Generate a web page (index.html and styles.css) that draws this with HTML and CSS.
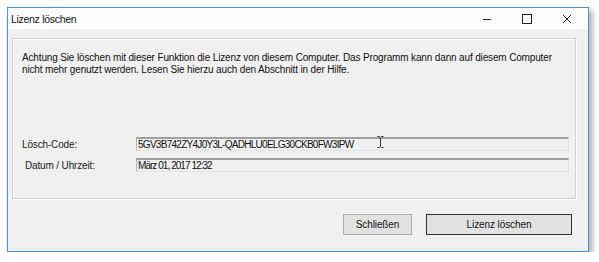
FILE: index.html
```html
<!DOCTYPE html>
<html lang="de">
<head>
<meta charset="utf-8">
<title>Lizenz löschen</title>
<link rel="stylesheet" href="styles.css">
</head>
<body>
<div class="window">
  <div class="titlebar">
    <span class="title">Lizenz löschen</span>
    <div class="controls">
      <span class="ctl"><svg width="10" height="10" viewBox="0 0 10 10"><path d="M1 5.5H9" stroke="#222" stroke-width="1"/></svg></span>
      <span class="ctl"><svg width="10" height="10" viewBox="0 0 10 10"><rect x="0.5" y="0.5" width="9" height="9" fill="none" stroke="#222" stroke-width="1"/></svg></span>
      <span class="ctl"><svg width="10" height="10" viewBox="0 0 10 10"><path d="M1 1L9 9M9 1L1 9" stroke="#222" stroke-width="1"/></svg></span>
    </div>
  </div>
  <div class="client">
    <div class="group">
      <p class="msg">Achtung Sie löschen mit dieser Funktion die Lizenz von diesem Computer. Das Programm kann dann auf diesem Computer nicht mehr genutzt werden. Lesen Sie hierzu auch den Abschnitt in der Hilfe.</p>
      <div class="row first">
        <span class="label">Lösch-Code:</span>
        <span class="field code">5GV3B742ZY4J0Y3L-QADHLU0ELG30CKB0FW3IPW</span>
      </div>
      <div class="row">
        <span class="label indent">Datum / Uhrzeit:</span>
        <span class="field date">März 01, 2017 12:32</span>
      </div>
      <svg class="ibeam" width="7" height="12" viewBox="0 0 7 12"><path d="M0.5 0.5H2.5L3.5 1.5L4.5 0.5H6.5M3.5 1.5V10.5M0.5 11.5H2.5L3.5 10.5L4.5 11.5H6.5" stroke="#333" fill="none" stroke-width="1"/></svg>
    </div>
    <div class="buttons">
      <button class="btn">Schließen</button>
      <button class="btn default">Lizenz löschen</button>
    </div>
  </div>
</div>
</body>
</html>
```
FILE: styles.css
```css
html, body {
  margin: 0;
  padding: 0;
  background: #ffffff;
}
body {
  padding: 7px 0 0 7px;
  font-family: "Liberation Sans", Arial, sans-serif;
  font-size: 10px;
  letter-spacing: -0.15px;
  color: #1a1a1a;
}
.window {
  width: 582px;
  height: 245px;
  box-sizing: border-box;
  border: 1px solid #4d93d9;
  background: #f0f0f0;
  display: flex;
  flex-direction: column;
  box-shadow: 3px 3px 6px rgba(0,0,0,0.35);
}
.titlebar {
  height: 21px;
  background: #ffffff;
  display: flex;
  align-items: center;
  justify-content: space-between;
}
.title {
  padding-left: 3px;
  font-size: 10.5px;
  letter-spacing: -0.3px;
  color: #111;
  padding-top: 1px;
}
.controls {
  display: flex;
  height: 100%;
  margin-right: 1px;
}
.ctl {
  width: 40px;
  display: flex;
  align-items: center;
  justify-content: center;
  padding-top: 1px;
}
.client {
  flex: 1;
  display: flex;
  flex-direction: column;
  padding: 9px 12px 0 4px;
}
.group {
  position: relative;
  height: 161px;
  box-sizing: border-box;
  border: 1px solid #d0d0d0;
  box-shadow: inset 1px 1px 0 #ffffff, 1px 1px 0 #ffffff;
  padding: 13px 6px 0 9px;
  display: flex;
  flex-direction: column;
}
.msg {
  margin: 0;
  line-height: 12px;
  width: 535px;
  color: #111;
}
.row {
  display: flex;
  align-items: center;
  height: 14px;
  margin-top: 7px;
}
.row.first {
  margin-top: 61px;
}
.label {
  width: 114px;
  flex: none;
  color: #222;
  padding-top: 1px;
}
.label.indent {
  padding-left: 3px;
  width: 111px;
}
.field {
  width: 434px;
  height: 14px;
  box-sizing: border-box;
  border-top: 2px solid #a0a0a0;
  border-left: 1px solid #b5b5b5;
  border-right: 1px solid #e3e3e3;
  border-bottom: 1px solid #e3e3e3;
  font-size: 10px;
  line-height: 11px;
  padding-left: 1px;
  color: #111;
  white-space: nowrap;
}
.field.code {
  letter-spacing: -0.72px;
}
.field.date {
  letter-spacing: -0.95px;
}
.ibeam {
  position: absolute;
  left: 364px;
  top: 97px;
}
.buttons {
  display: flex;
  justify-content: flex-end;
  gap: 14px;
  margin-top: 15px;
  padding-right: 4px;
}
.btn {
  height: 21px;
  width: 69px;
  box-sizing: border-box;
  border: 1px solid #adadad;
  background: #e1e1e1;
  font-family: "Liberation Sans", Arial, sans-serif;
  font-size: 10px;
  letter-spacing: -0.1px;
  color: #111;
  padding: 0;
  margin: 0;
}
.btn.default {
  width: 146px;
  border: 1px solid #333333;
  box-shadow: inset 0 0 0 1px #e1e1e1;
}
```
